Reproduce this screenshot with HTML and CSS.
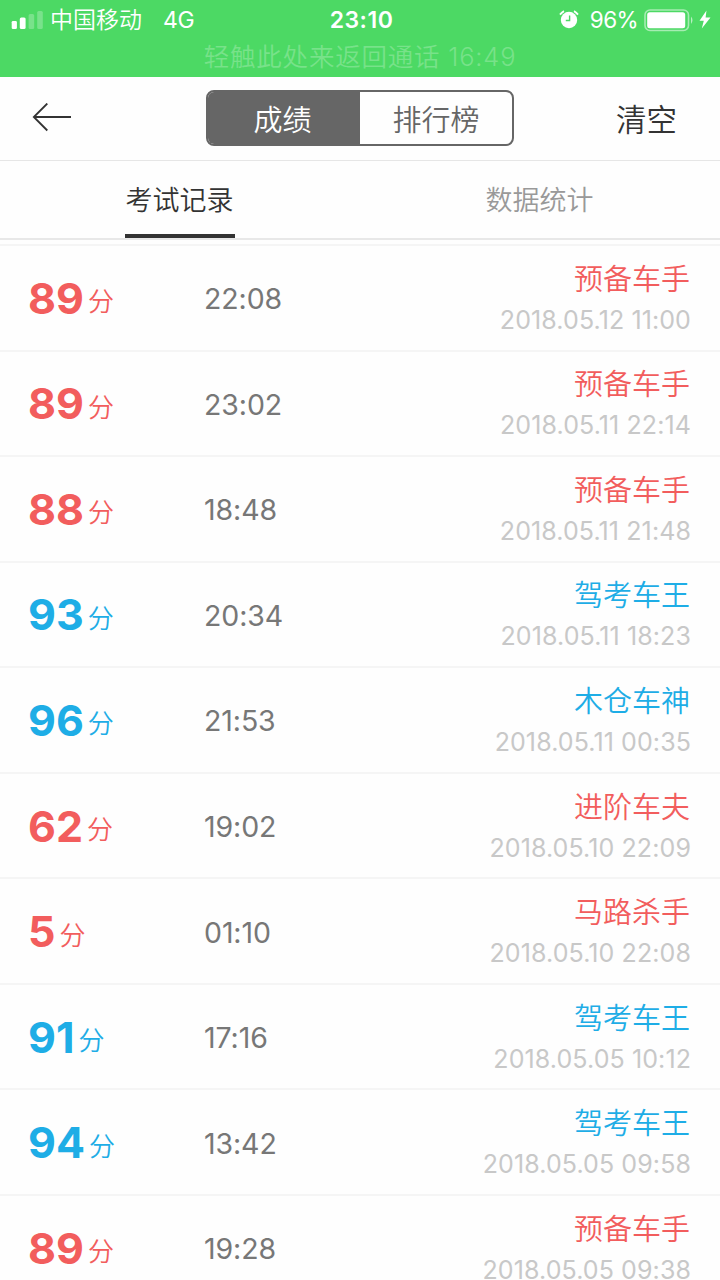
FILE: index.html
```html
<!DOCTYPE html>
<html lang="zh-CN">
<head>
    <meta charset="UTF-8">
    <meta name="viewport" content="width=device-width, initial-scale=1.0">
    <title>成绩</title>
    <link rel="stylesheet" href="styles.css">
</head>
<body>
    <!-- Status bar -->
    <div class="status-bar">
        <div class="status-row">
            <div class="status-left">
                <svg class="signal" width="32" height="20" viewBox="0 0 32 20" fill="#fff">
                    <rect x="0.7" y="11" width="5.2" height="8" rx="1.3"/>
                    <rect x="8.8" y="7.5" width="5.8" height="11.5" rx="1.5"/>
                    <rect x="17.6" y="4" width="5.6" height="15" rx="1.5" opacity="0.25"/>
                    <rect x="26.2" y="1" width="5.6" height="18" rx="1.5" opacity="0.25"/>
                </svg>
                <span class="carrier">中国移动</span>
                <span class="network">4G</span>
            </div>
            <span class="clock">23:10</span>
            <div class="status-right">
                <svg class="alarm" width="20" height="20" viewBox="0 0 20 20">
                    <circle cx="10" cy="10" r="8.2" fill="#fff"/>
                    <path d="M1 4.6 A12 12 0 0 1 5 1.1 M19 4.6 A12 12 0 0 0 15 1.1" fill="none" stroke="#fff" stroke-width="1.8"/>
                    <path d="M10.6 5.5v5H6.8" fill="none" stroke="#4cd964" stroke-width="1.4"/>
                </svg>
                <span class="percent">96%</span>
                <svg class="battery" width="50" height="23" viewBox="0 0 50 23">
                    <rect x="1" y="1" width="43.5" height="20.5" rx="5" fill="none" stroke="#fff" stroke-width="1.6" opacity="0.5"/>
                    <rect x="3.2" y="3.3" width="38" height="16" rx="2.5" fill="#fff"/>
                    <path d="M47 7.5 Q50 11 47 15z" fill="#fff" opacity="0.6"/>
                </svg>
                <svg class="bolt" width="12" height="20" viewBox="0 0 12 20">
                    <path d="M7.5 0.5L0.5 10.8h4.3L2.8 18.5L11.5 7.5H6.6z" fill="#fff"/>
                </svg>
            </div>
        </div>
        <p class="call-tip">轻触此处来返回通话 16:49</p>
    </div>

    <!-- Header -->
    <header class="header">
        <svg class="back" width="40" height="30" viewBox="0 0 40 30" fill="none" stroke="#333" stroke-width="1.8">
            <path d="M15.3 0.5L1.8 14L15.3 27.5M1.8 14H39"/>
        </svg>
        <div class="segment">
            <button class="segment-btn active">成绩</button>
            <button class="segment-btn">排行榜</button>
        </div>
        <button class="clear-btn">清空</button>
    </header>

    <!-- Tabs -->
    <nav class="tabs">
        <button class="tab-btn active">考试记录</button>
        <button class="tab-btn">数据统计</button>
    </nav>

    <!-- Records -->
    <ul class="record-list" id="record-list"></ul>

    <script>
        const records = [
            { score: 89, time: "22:08", title: "预备车手", date: "2018.05.12 11:00" },
            { score: 89, time: "23:02", title: "预备车手", date: "2018.05.11 22:14" },
            { score: 88, time: "18:48", title: "预备车手", date: "2018.05.11 21:48" },
            { score: 93, time: "20:34", title: "驾考车王", date: "2018.05.11 18:23" },
            { score: 96, time: "21:53", title: "木仓车神", date: "2018.05.11 00:35" },
            { score: 62, time: "19:02", title: "进阶车夫", date: "2018.05.10 22:09" },
            { score: 5, time: "01:10", title: "马路杀手", date: "2018.05.10 22:08" },
            { score: 91, time: "17:16", title: "驾考车王", date: "2018.05.05 10:12" },
            { score: 94, time: "13:42", title: "驾考车王", date: "2018.05.05 09:58" },
            { score: 89, time: "19:28", title: "预备车手", date: "2018.05.05 09:38" }
        ];

        const recordList = document.getElementById('record-list');
        records.forEach(record => {
            const item = document.createElement('li');
            // 90 is the pass mark
            item.classList.add('record', record.score >= 90 ? 'pass' : 'fail');
            item.innerHTML = `
                <div class="score"><span class="score-num">${record.score}</span><span class="score-unit">分</span></div>
                <div class="time">${record.time}</div>
                <div class="result">
                    <div class="result-title">${record.title}</div>
                    <div class="result-date">${record.date}</div>
                </div>
            `;
            recordList.appendChild(item);
        });
    </script>
</body>
</html>
```
FILE: styles.css
```css
* {
    margin: 0;
    padding: 0;
    box-sizing: border-box;
}

body {
    height: 1280px;
    overflow: hidden;
    font-family: Inter, 'Noto Sans CJK SC', sans-serif;
    font-weight: 350;
    background-color: #fefefe;
    color: #333;
}

button {
    background: none;
    border: none;
    font-family: inherit;
    font-weight: inherit;
    color: inherit;
}

/* Status bar */
.status-bar {
    height: 77px;
    background-color: #4cd964;
    color: #fff;
}

.status-row {
    display: grid;
    grid-template-columns: 1fr auto 1fr;
    align-items: center;
    height: 40px;
    padding: 0 9px 0 11px;
    font-size: 23px;
    line-height: 40px;
}

.status-left,
.status-right {
    display: flex;
    align-items: center;
}

.status-right {
    justify-content: flex-end;
}

.carrier {
    margin-left: 7px;
}

.network {
    margin-left: 21px;
    font-weight: 400;
    letter-spacing: -0.3px;
}

.clock {
    padding-left: 1px;
    font-weight: 600;
    letter-spacing: 0.5px;
}

.percent {
    margin: 0 6px 0 11px;
    font-size: 22.5px;
    font-weight: 400;
    letter-spacing: -0.6px;
}

.bolt {
    margin-left: 5px;
}

.call-tip {
    font-size: 25.5px;
    line-height: 34px;
    letter-spacing: 0.8px;
    text-align: center;
    color: rgba(255, 255, 255, 0.25);
}

/* Header */
.header {
    display: grid;
    grid-template-columns: 174px 308px 1fr;
    align-items: center;
    height: 84px;
    padding: 0 43px 1px 32px;
    border-bottom: 1px solid #e6e6e6;
}

.segment {
    display: flex;
    height: 56px;
    border: 2px solid #666;
    border-radius: 8px;
    overflow: hidden;
}

.segment-btn {
    width: 50%;
    font-size: 29px;
    color: #666;
}

.segment-btn.active {
    padding-right: 3px;
    background-color: #666;
    color: #fff;
}

.clear-btn {
    justify-self: end;
    padding-bottom: 1px;
    font-size: 30.5px;
}

/* Tabs */
.tabs {
    display: flex;
    justify-content: space-around;
    height: 79px;
    border-bottom: 2px solid #e8e8e8;
}

.tab-btn {
    width: 110px;
    padding: 2px 1px 0 0;
    font-size: 27px;
    white-space: nowrap;
    color: #999;
    border-bottom: 4px solid transparent;
}

.tab-btn.active {
    color: #333;
    border-bottom-color: #333;
}

/* Records */
.record-list {
    margin-top: 4px;
    border-top: 2px solid #f5f5f5;
    list-style: none;
}

.record {
    display: flex;
    align-items: center;
    height: 105.55px;
    padding: 0 30px 0 28px;
    border-bottom: 2px solid #f5f5f5;
}

.score {
    display: flex;
    align-items: center;
    width: 176px;
}

.score-num {
    font-size: 43px;
    font-weight: 700;
}

.score-unit {
    margin-left: 4px;
    padding-top: 4px;
    font-size: 26px;
}

.time {
    padding-top: 2px;
    font-size: 28.5px;
    font-weight: 400;
    letter-spacing: -0.1px;
    color: #777;
}

.result {
    margin-left: auto;
    padding-bottom: 6px;
    text-align: right;
}

.result-title {
    font-size: 29px;
    line-height: 42px;
}

.result-date {
    margin: 8px -1px 0 0;
    font-size: 25px;
    font-weight: 400;
    line-height: 22px;
    letter-spacing: 0.1px;
    color: #c8c8c8;
}

.pass .score,
.pass .result-title {
    color: #1eade6;
}

.fail .score,
.fail .result-title {
    color: #f25d5d;
}
```
